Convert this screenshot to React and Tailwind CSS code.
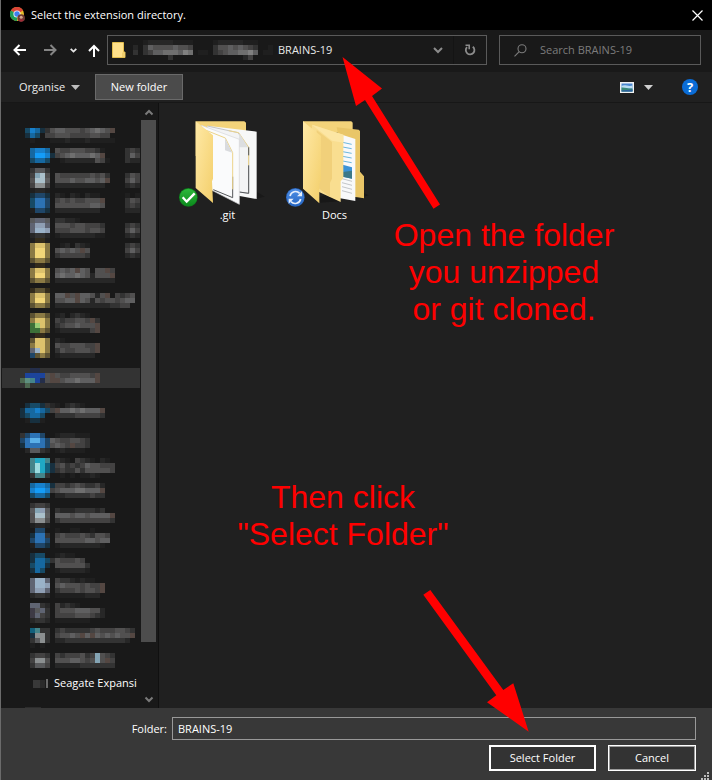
import React from 'react';

const CELL = 5;

const PALETTE = {
  1: '#1f1f1f', 2: '#272727', 3: '#333333', 4: '#434242', 5: '#515050', 6: '#5f5f60', 7: '#6f6f6f', 8: '#808080',
  a: '#17303f', b: '#174a66', c: '#1668a0', d: '#1780cc', e: '#149df8', f: '#2c72b4', g: '#1f4668', s: '#5ab0e8',
  h: '#58595b', i: '#84a4b4', j: '#aac0ca', k: '#8b8f90', l: '#5f6472', m: '#8f9fb4', n: '#9ab2c8',
  y: '#332c1c', z: '#8b7a44', Y: '#dcc26c', Z: '#f2d678', x: '#5c5232',
  G: '#3c7038', H: '#96cc74', q: '#4c6850', p: '#5f9080',
  t: '#12607c', u: '#20a8c4', v: '#9cdce0', w: '#45848a', N: '#1c449c', M: '#242e4a',
  r: '#544742', o: '#3d3a45',
};

/* Column 0 starts at the left of the root icons; nested icons start two columns in. */
const SIDEBAR = [
  { gap: 0, rows: ['', '.bdca3566555456765r', '.acb.4455544445544', '..1...1112111211111', ''] },
  { gap: 0, rows: ['..cddc.5445554431....343', '..ceeda456766676r....364', '..bccb..1222222541...322', ''] },
  { gap: 0, rows: ['..3hh3', '..4ij5.54444445453...354', '..5jj6.5556556656r...464', '..4kk4.2222222222....232', '..1221'] },
  { gap: 0, rows: ['..agga.21.21.211.....1.1', '..bffg.454544555r....354', '..bffg.5555555665....343', '..1gga.222222222.....222', ''] },
  { gap: 0, rows: ['..hllh.33221', '..lmml.5554554443....343', '..lnnm.4445554554....464', '..2332.1222222211....232', '..1yy1'] },
  { gap: 0, rows: ['..zYYz..12.321.......343', '..zZZz.56565r5.......464', '..zZZz.3444443.......232', '..xzzx.............', '..1yy1'] },
  { gap: 0, rows: ['..zYYz.5656r65.55r4', '..zZZz.67667652555r', '..xzzx.222222222222', ''] },
  { gap: 0, rows: ['..yxxy', '..zYYz.66r5r66525r.4345', '..zZZz.5566r65254554566', '..xzzx.222222222223344', ''] },
  { gap: 0, rows: ['..xzzx.12.2321', '..zYYz.4344554r3', '..GHYz.34556555r', '..GGzx.12222224r', '..1yy1'] },
  { gap: 0, rows: ['..xYYz.21', '..zYYz.54455544r', '..lnYz.35445554r', '..gxzx.12222222'] },
  { gap: 10, selected: true, rows: ['..MM', '.NNNN5r54455554r', 'qpwNM5rr5667666r', '3q33..3333333333'] },
  { gap: 15, rows: ['.abba321.2321', 'accdcb4r66767666r', 'abccb..3333444443', '.1aa1'] },
  { gap: 10, rows: ['3gffg..1222111', 'gfssfg65445543', 'affffg5654r443', '.2hh32.121111'] },
  { gap: 5, rows: ['..wuuw.321.4321.21', '..wvuta453434655444', '..wvuta343353555554', '..3ww3..1.1.1121'] },
  { gap: 5, rows: ['..cddca4434543342', '..deed4566677666r', '..bccb.2233333433', ''] },
  { gap: 0, rows: ['..3443', '..himh.3222333323', '..5jj6.66656656666r', '..5kk5.344444444443', '..1221'] },
  { gap: 0, rows: ['...gg..1..11..1', '..aff3.45444543554', '..gffg.55555566566', '..1gga.1222222221', ''] },
  { gap: 0, rows: ['..abb..1211', '..accb3544454', '..bcca.5555553', '..acb..1222221'] },
  { gap: 5, rows: ['..lnnl.43321211', '..lnnm.565554544r', '..lmml.344454554r', '..2332.111111222', ''] },
  { gap: 0, rows: ['..ll32.42321', '..ohl3.4555666552', '..ol43.4444555432', '..2332.1111111'] },
  { gap: 5, rows: ['..tw33.3433333454445543', '..akk3.45565r6r6565655r', '..3hk3.223333333333332', '..1.1'] },
  { gap: 5, rows: ['..3443.43444534i543', '..4kk5.55566545i5r4', '..3hh4.222223333333', ''] },
];

function Mosaic({ rows, columns, className = '' }) {
  return (
    <svg
      aria-hidden="true"
      width={columns * CELL}
      height={rows.length * CELL}
      shapeRendering="crispEdges"
      className={`block shrink-0 ${className}`}
    >
      {rows.map((row, y) =>
        [...row].map((key, x) =>
          PALETTE[key] ? (
            <rect key={`${x}-${y}`} x={x * CELL} y={y * CELL} width={CELL} height={CELL} fill={PALETTE[key]} />
          ) : null,
        ),
      )}
    </svg>
  );
}

function ChromeIcon() {
  return (
    <svg width="16" height="16" viewBox="0 0 16 16" aria-hidden="true">
      <circle cx="7" cy="7" r="7" fill="#e8bf2c" />
      <path d="M7 7 0.9 3.5A7 7 0 0 1 13.1 3.5Z" fill="#dc4437" />
      <path d="M7 7 0.9 3.5A7 7 0 0 0 7 14Z" fill="#1f9d58" />
      <circle cx="7" cy="7" r="3.6" fill="#f2f4f6" />
      <circle cx="7" cy="7" r="2.7" fill="#3f7fee" />
      <circle cx="11.2" cy="11" r="3.8" fill="#6d3b34" />
      <circle cx="11.2" cy="10.2" r="1.5" fill="#d7a58e" />
      <path d="M8.6 13.6c.6-1.8 4.4-1.8 5 0-1.3 1.4-3.7 1.4-5 0Z" fill="#a02c38" />
    </svg>
  );
}

function SmallFolder() {
  return (
    <svg width="14" height="16" viewBox="0 0 14 16" aria-hidden="true" className="shrink-0">
      <path d="M.5.5h11v9.5h1.500v5.500H.5Z" fill="#ffe08a" stroke="#e2bd4e" />
      <path d="M11 10.500v4.500" stroke="#e2bd4e" />
    </svg>
  );
}

function TitleBar() {
  return (
    <header className="flex h-[30px] items-center bg-black pl-[9px] text-white">
      <ChromeIcon />
      <h1 className="ml-[5px] flex-1">Select the extension directory.</h1>
      <button type="button" aria-label="Close" className="flex h-full w-[29px] items-center justify-center">
        <svg width="11" height="11" viewBox="0 0 11 11" stroke="#fff" strokeWidth="1.2">
          <path d="M.5.5l10 10M10.500.5l-10 10" />
        </svg>
      </button>
    </header>
  );
}

function NavBar() {
  return (
    <nav className="flex h-[42px] items-center bg-[#191919] pt-[5px] pr-[11px] pb-[7px] pl-1">
      <button type="button" aria-label="Back" className="flex h-[30px] w-[30px] items-center justify-center">
        <svg width="14" height="12" viewBox="0 0 14 12" fill="none" stroke="#fff" strokeWidth="2">
          <path d="M13 6H2M6.500 1 1.500 6l5 5" />
        </svg>
      </button>
      <button type="button" aria-label="Forward" className="flex h-[30px] w-[30px] items-center justify-center">
        <svg width="14" height="12" viewBox="0 0 14 12" fill="none" stroke="#858585" strokeWidth="2">
          <path d="M1 6h11M7.500 1l5 5-5 5" />
        </svg>
      </button>
      <button type="button" aria-label="Recent locations" className="flex h-[30px] w-[17px] items-center justify-center">
        <svg width="7" height="5" viewBox="0 0 7 5" fill="none" stroke="#e6e6e6" strokeWidth="1.8">
          <path d="M.7.8 3.500 3.600 6.300.8" />
        </svg>
      </button>
      <button type="button" aria-label="Up" className="flex h-[30px] w-6 items-center justify-center">
        <svg width="12" height="13" viewBox="0 0 12 13" fill="none" stroke="#fff" strokeWidth="2">
          <path d="M6 13V2M1 7l5-5 5 5" />
        </svg>
      </button>
      <div className="ml-px flex h-[30px] min-w-0 flex-1 border border-[#5a5a5a]">
        <div className="flex min-w-0 flex-1 items-center pl-1">
          <SmallFolder />
          <Mosaic
            columns={29}
            rows={[
              '..1222221111....122222111',
              '2.3655556554....355656543..1.',
              '3.3466777687.11.345667786.11.',
              '.......3..............24',
            ]}
            className="ml-[7px]"
          />
          <span className="text-[#e8e8e8]">BRAINS-19</span>
        </div>
        <button type="button" aria-label="Previous locations" className="flex w-[30px] items-center justify-center">
          <svg width="10" height="7" viewBox="0 0 10 7" fill="none" stroke="#8c8c8c" strokeWidth="2">
            <path d="M1 1l4 4 4-4" />
          </svg>
        </button>
        <button type="button" aria-label="Refresh" className="flex w-[33px] items-center justify-center border-l border-[#141414]">
          <svg width="12" height="12" viewBox="0 0 12 12" fill="none" stroke="#8c8c8c" strokeWidth="1.8">
            <path d="M8.800 2.800A4.300 4.300 0 1 1 3 3.200" />
            <path d="M1.500 1.300h3.700v3.900" strokeWidth="1.600" />
          </svg>
        </button>
      </div>
      <label className="ml-3 flex h-[30px] w-[202px] items-center border border-[#5a5a5a] pl-[14px]">
        <svg width="13" height="13" viewBox="0 0 13 13" fill="none" stroke="#7c7c7c" strokeWidth="1.1" aria-hidden="true">
          <circle cx="8" cy="4.700" r="4" />
          <path d="M5.200 7.600.5 12.300" />
        </svg>
        <input
          type="search"
          aria-label="Search BRAINS-19"
          placeholder="Search BRAINS-19"
          className="ml-[13px] min-w-0 flex-1 bg-transparent outline-none placeholder:text-[#7c7c7c]"
        />
      </label>
    </nav>
  );
}

function Toolbar() {
  return (
    <div className="flex h-[31px] items-center border-b border-[#171717] bg-[#202020] pr-[14px] pl-[18px] text-[#ececec]">
      <button type="button" className="flex w-[61px] items-center justify-between">
        Organise
        <svg width="9" height="5" viewBox="0 0 9 5" fill="#bdbdbd" aria-hidden="true">
          <path d="M0 0h9L4.500 5Z" />
        </svg>
      </button>
      <button type="button" className="ml-[15px] h-[26px] w-[88px] border border-[#6a6a6a] bg-[#4b4b4b] text-white">
        New folder
      </button>
      <button type="button" aria-label="Change your view" className="ml-auto flex items-center gap-[10px]">
        <svg width="14" height="11" viewBox="0 0 14 11">
          <path d="M0 0h14v11H0Z" fill="#f2f2f2" />
          <path d="M1.500 1.500h11v8h-11Z" fill="#4a86cf" />
          <path d="M1.500 4c3-2 7 1 11-.5v3h-11Z" fill="#b9dcf2" />
          <path d="M1.500 5.500c3-.5 7 1.500 11 1v3h-11Z" fill="#3b8a78" />
          <path d="M1.500 8.500l11-1v2h-11Z" fill="#2b5f9c" />
        </svg>
        <svg width="9" height="5" viewBox="0 0 9 5" fill="#d0d0d0">
          <path d="M0 0h9L4.500 5Z" />
        </svg>
      </button>
      <button
        type="button"
        aria-label="Get help"
        className="ml-[29px] flex size-4 items-center justify-center rounded-full bg-[#0a6cd6] text-[13px] leading-4 font-bold text-white"
      >
        ?
      </button>
    </div>
  );
}

function Sidebar() {
  return (
    <aside className="flex w-[158px] shrink-0 border-r border-[#101010] bg-[#191919]">
      <ul className="w-[139px] overflow-hidden pt-5">
        {SIDEBAR.map(({ gap, rows, selected }, index) => (
          <li key={index} style={{ marginTop: gap }} className={selected ? 'ml-px bg-[#333333] pl-[18px]' : 'pl-[19px]'}>
            <Mosaic rows={rows} columns={24} />
          </li>
        ))}
        <li className="flex h-5 items-center pl-8">
          <svg width="16" height="9" aria-hidden="true" shapeRendering="crispEdges" className="shrink-0">
            <path d="M0 1h7v8H0Z" fill="#383838" />
            <path d="M7 1h5v8H7Z" fill="#2a2a2a" />
            <path d="M13 0h2v9h-2Z" fill="#6a6a6a" />
          </svg>
          <span className="ml-[5px] whitespace-nowrap text-white">Seagate Expansi</span>
        </li>
        <li aria-hidden="true" className="mt-[14px] ml-6 h-px w-4 bg-[#2c2c2c]" />
      </ul>
      <div className="ml-px flex w-[15px] flex-col items-center" role="presentation">
        <svg width="15" height="17" viewBox="0 0 15 17" fill="none" stroke="#7a7a7a" strokeWidth="2">
          <path d="M4.500 11.500 8 8l3.500 3.500" />
        </svg>
        <div className="h-[522px] w-full bg-[#4d4d4d]" />
        <svg width="15" height="17" viewBox="0 0 15 17" fill="none" stroke="#7a7a7a" strokeWidth="2" className="mt-auto">
          <path d="M4.500 6.500 8 10l3.500-3.500" />
        </svg>
      </div>
    </aside>
  );
}

function GitFolderIcon() {
  return (
    <svg width="107" height="87" viewBox="12 30 321 261" aria-hidden="true">
      <defs>
        <linearGradient id="flap" x1="0" x2="1" y1="0" y2="1">
          <stop offset="0" stopColor="#ffe9a6" />
          <stop offset="1" stopColor="#f3cf6b" />
        </linearGradient>
        <linearGradient id="green" x1="0" x2="0" y1="0" y2="1">
          <stop offset="0" stopColor="#2eb83c" />
          <stop offset="1" stopColor="#0b8a1c" />
        </linearGradient>
      </defs>
      <path d="M262 246l22 14-26 6Z" fill="#191919" />
      <path d="M77 34h146l5 4v100H77Z" fill="#f3d37a" />
      <path d="M112 47l148 18v202l-80-14Z" fill="#f7f8f8" />
      <path d="M112 48l92 20 32 44v138l-60-8" fill="#f3f4f5" stroke="#a9abad" strokeWidth="2" />
      <path d="M176 62l30 6 30 44v54" fill="none" stroke="#ecd48a" strokeWidth="3" />
      <path d="M236 112v24M236 166v84l-28-4" fill="none" stroke="#55575a" strokeWidth="3" />
      <path d="M208 70l26 42h-28Z" fill="#dcdee0" />
      <path d="M94 46l114 42v195l-82-42Z" fill="#fafbfc" stroke="#d4d5d7" strokeWidth="2" />
      <path d="M188 200v63l-58-24" fill="none" stroke="#55575a" strokeWidth="3" />
      <path d="M106 60l60 24 22 44v110" fill="none" stroke="#ecd48a" strokeWidth="3" />
      <path d="M165 84l22 44-22-7Z" fill="#d9dbde" />
      <path d="M77 34l52 42v130l-3 8 3 65-52-45Z" fill="url(#flap)" />
      <circle cx="55" cy="262" r="28" fill="#0d7d1c" />
      <circle cx="55" cy="262" r="26" fill="url(#green)" />
      <path d="M38 262l12 13 24-25" fill="none" stroke="#fff" strokeWidth="7" />
    </svg>
  );
}

function DocsFolderIcon() {
  return (
    <svg width="107" height="87" viewBox="333 30 321 261" aria-hidden="true">
      <defs>
        <linearGradient id="blue" x1="0" x2="0" y1="0" y2="1">
          <stop offset="0" stopColor="#4f8fe6" />
          <stop offset="1" stopColor="#2566c4" />
        </linearGradient>
      </defs>
      <path d="M448 262l34-12 30 24-64 4ZM556 268l40-12-16-8Z" fill="#181818" />
      <path d="M399 34h145l4 4v30h-149Z" fill="#f3d37a" />
      <path d="M500 52l66 7 4 4v122l12 14v66l-40-6Z" fill="#e9c668" />
      <path d="M490 66l66 21v186l-66-12Z" fill="#f8f9fa" />
      <path d="M518 97l27 6M518 111l27 5M518 125l27 5M518 139l27 5M518 153l27 5" stroke="#6cb7de" strokeWidth="3" />
      <path d="M518 164l28 8v34l-28-6Z" fill="#3b92d6" />
      <path d="M518 186l28-4v24l-28-6Z" fill="#3c7888" />
      <path d="M516 206l30 8M516 218l30 8M516 230l30 8M516 242l30 8" stroke="#c3c6c9" strokeWidth="3" />
      <path d="M426 44l94 30v130l-8 10v62l-86-40Z" fill="#f9de90" />
      <path d="M440 60l46 36v110l-6 12v42l-40-30Z" fill="#f1d07a" />
      <path d="M426 44l94 30v24l-34-6Z" fill="#fce6a4" />
      <path d="M399 34l54 44v132l-5 12v58l-49-44Z" fill="url(#flap)" />
      <circle cx="376" cy="262" r="28" fill="#2a63b8" />
      <circle cx="376" cy="262" r="26" fill="url(#blue)" />
      <path d="M360 258a17 17 0 0 1 29-8M392 267a17 17 0 0 1-29 8" fill="none" stroke="#e6eefb" strokeWidth="5" />
      <path d="M396 244v15h-15ZM356 281v-15h15Z" fill="#e6eefb" />
    </svg>
  );
}

function FileGrid() {
  return (
    <main className="flex flex-1 flex-wrap content-start items-start bg-[#202020] pt-[17px] pl-[15px]">
      <button type="button" className="flex w-[107px] flex-col text-white">
        <GitFolderIcon />
        <span className="w-full text-center">.git</span>
      </button>
      <button type="button" className="flex w-[107px] flex-col text-white">
        <DocsFolderIcon />
        <span className="w-full text-center">Docs</span>
      </button>
    </main>
  );
}

function Footer() {
  return (
    <footer className="relative bg-[#383838] pt-[9px] pr-4 pb-[9px] text-white">
      <div className="flex items-center">
        <label htmlFor="folder" className="w-[171px] pr-[5px] text-right">
          Folder:
        </label>
        <input
          id="folder"
          type="text"
          defaultValue="BRAINS-19"
          className="h-[23px] min-w-0 flex-1 border border-[#999999] bg-[#383838] px-[5px] outline-none"
        />
      </div>
      <div className="mt-[5px] flex justify-end gap-3">
        <button type="button" className="h-[26px] w-[107px] border-2 border-white bg-[#333333]">
          Select Folder
        </button>
        <button type="button" className="h-[26px] w-[88px] border border-white bg-[#333333] outline outline-1 -outline-offset-2 outline-[#9b9b9b]">
          Cancel
        </button>
      </div>
      <svg width="9" height="9" viewBox="0 0 9 9" fill="#bdbdbd" aria-hidden="true" className="absolute right-0.5 bottom-0">
        <path d="M6 1h2v2H6ZM3 4h2v2H3ZM6 4h2v2H6ZM0 7h2v2H0ZM3 7h2v2H3ZM6 7h2v2H6Z" />
      </svg>
    </footer>
  );
}

function Annotations() {
  return (
    <div className="pointer-events-none absolute top-0 -left-px h-[780px] w-[712px] text-center font-['Liberation_Sans',Arial,sans-serif] text-[32px] leading-[37px] text-[#ff0000]">
      <svg width="712" height="780" viewBox="0 0 712 780" fill="#ff0000" aria-hidden="true" className="absolute top-0 left-0">
        <path d="M342.500 57 382 88.500l-10 7.500 68 108.500-6.500 4.200L365 100l-9 6Z" />
        <path d="M423.300 594.700l7-4.700 73 100 10-6.700 15.400 48.400-41.700-29.400 9.300-7Z" />
      </svg>
      <p className="absolute top-[217px] left-96 w-60">
        Open the folder
        <br />
        you unzipped
        <br />
        or git cloned.
      </p>
      <p className="absolute top-[479px] left-[223px] w-60">
        Then click
        <br />
        "Select Folder"
      </p>
    </div>
  );
}

export default function App() {
  return (
    <div className="relative flex min-h-screen flex-col border-l border-[#6b6b6b] bg-[#202020] font-['Open_Sans','Noto_Sans',sans-serif] text-[11px] leading-4">
      <TitleBar />
      <NavBar />
      <Toolbar />
      <div className="flex flex-1">
        <Sidebar />
        <FileGrid />
      </div>
      <Footer />
      <Annotations />
    </div>
  );
}
